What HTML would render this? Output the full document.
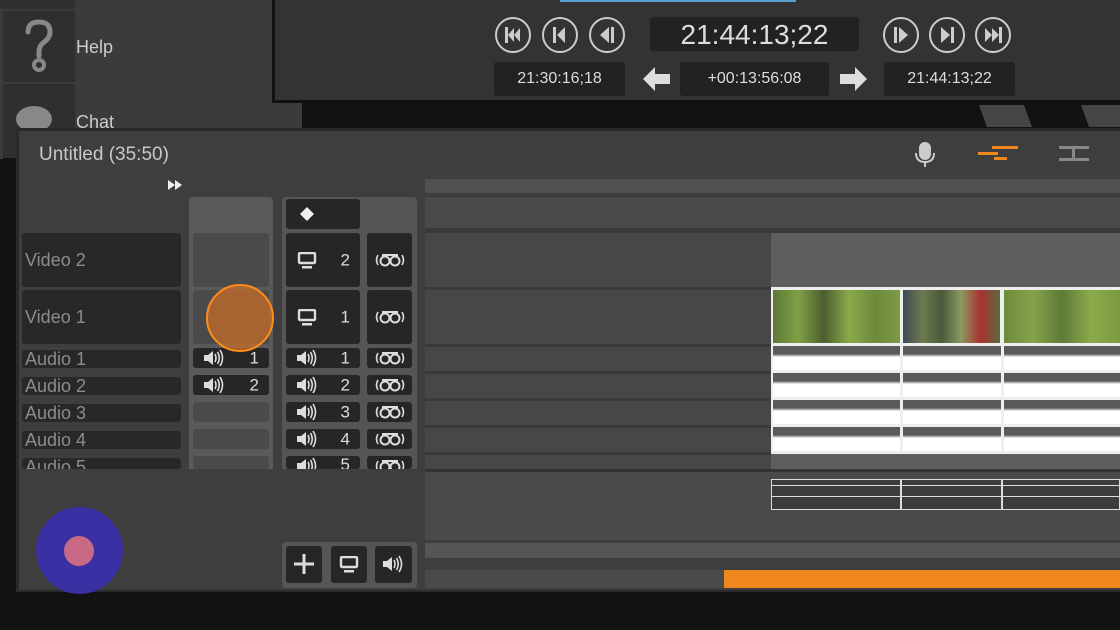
<!DOCTYPE html>
<html><head><meta charset="utf-8"><style>
*{margin:0;padding:0;box-sizing:border-box}
body{width:1120px;height:630px;background:#121212;position:relative;overflow:hidden;font-family:"Liberation Sans","DejaVu Sans",sans-serif;color:#ccc}
div,svg{position:absolute}
.lbl{background:#282828;border-radius:3px;color:#8c8c8c;font-size:18px;padding-left:3px;line-height:1}
.c{background:#262626;border-radius:3px;color:#ddd;font-size:17px}
.tc{background:#222;border-radius:3px;color:#ddd;text-align:center}
.btn{width:36px;height:36px;border:2px solid #ccc;border-radius:50%}
.row{left:425px;width:695px;background:#474747}
.n{position:absolute;right:10px;top:50%;transform:translateY(-50%);line-height:1}
</style></head><body>
<svg width="0" height="0" style="position:absolute">
<defs>
<g id="spk"><path d="M1 6H5L10 2V16L5 12H1Z" fill="#ddd"/><path d="M12 5Q14 9 12 13M14.5 3Q18 9 14.5 15M17 1Q22 9 17 17" stroke="#ddd" stroke-width="1.6" fill="none"/></g>
<g id="mon"><rect x="2" y="1" width="16" height="10" rx="1" fill="none" stroke="#ddd" stroke-width="2.4"/><rect x="5" y="14" width="10" height="2.5" fill="#ddd"/></g>
<g id="bin"><path d="M3 3Q0 8 3 13" stroke="#ddd" stroke-width="1.6" fill="none"/><path d="M27 3Q30 8 27 13" stroke="#ddd" stroke-width="1.6" fill="none"/><circle cx="10" cy="9" r="4.5" fill="none" stroke="#ddd" stroke-width="2"/><circle cx="20" cy="9" r="4.5" fill="none" stroke="#ddd" stroke-width="2"/><rect x="7" y="2" width="16" height="2" fill="#ddd"/></g>
</defs></svg>
<!-- sidebar -->
<div style="left:0;top:0;width:302px;height:128px;background:#3b3b3b"></div>
<div style="left:0;top:0;width:75px;height:158px;background:#2f2f2f"></div>
<div style="left:0;top:9px;width:75px;height:2px;background:#3b3b3b"></div>
<div style="left:0;top:82px;width:75px;height:2px;background:#3b3b3b"></div>
<div style="left:0;top:9px;width:3px;height:150px;background:#3b3b3b"></div>
<svg style="left:22px;top:18px" width="34" height="56" viewBox="0 0 34 56"><path d="M6 14Q6 4 17 4Q28 4 28 14Q28 20 21 25Q17 28 17 34V38" stroke="#888" stroke-width="5" fill="none" stroke-linecap="round"/><circle cx="17" cy="47" r="5" fill="none" stroke="#888" stroke-width="4"/></svg>
<div style="left:76px;top:37px;font-size:18px;color:#ccc">Help</div>
<div style="left:16px;top:106px;width:36px;height:26px;border-radius:50%;background:#888"></div>
<div style="left:76px;top:112px;font-size:18px;color:#ccc">Chat</div>
<!-- transport -->
<div style="left:272px;top:0;width:848px;height:103px;background:#111"></div>
<div style="left:275px;top:0;width:845px;height:100px;background:#333"></div>
<div style="left:560px;top:0;width:236px;height:2px;background:#5a9ed0"></div>
<div class="btn" style="left:495px;top:17px"><svg width="32" height="32" viewBox="0 0 32 32"><rect x="8" y="8" width="3" height="16" fill="#ccc"/><path d="M11 16L17 9V23ZM17 16L23 9V23Z" fill="#ccc"/></svg></div>
<div class="btn" style="left:542px;top:17px"><svg width="32" height="32" viewBox="0 0 32 32"><rect x="9" y="8" width="3" height="16" fill="#ccc"/><path d="M13 16L21 8V24Z" fill="#ccc"/></svg></div>
<div class="btn" style="left:589px;top:17px"><svg width="32" height="32" viewBox="0 0 32 32"><path d="M9 16L18 8V24Z" fill="#ccc"/><rect x="20" y="8" width="3" height="16" fill="#ccc"/></svg></div>
<div class="tc" style="left:650px;top:17px;width:209px;height:34px;font-size:28px;line-height:36px">21:44:13;22</div>
<div class="btn" style="left:883px;top:17px"><svg width="32" height="32" viewBox="0 0 32 32"><rect x="9" y="8" width="3" height="16" fill="#ccc"/><path d="M14 8L23 16L14 24Z" fill="#ccc"/></svg></div>
<div class="btn" style="left:929px;top:17px"><svg width="32" height="32" viewBox="0 0 32 32"><path d="M10 8L19 16L10 24Z" fill="#ccc"/><rect x="20" y="8" width="3" height="16" fill="#ccc"/></svg></div>
<div class="btn" style="left:975px;top:17px"><svg width="32" height="32" viewBox="0 0 32 32"><path d="M8 9L15 16L8 23ZM15 9L22 16L15 23Z" fill="#ccc"/><rect x="22" y="8" width="3" height="16" fill="#ccc"/></svg></div>
<div class="tc" style="left:494px;top:62px;width:131px;height:34px;font-size:16px;line-height:34px">21:30:16;18</div>
<svg style="left:642px;top:65px" width="30" height="28" viewBox="0 0 30 28"><path d="M1 14L13 2V9H28V19H13V26Z" fill="#ddd"/></svg>
<div class="tc" style="left:680px;top:62px;width:149px;height:34px;font-size:16px;line-height:34px">+00:13:56:08</div>
<svg style="left:838px;top:65px" width="30" height="28" viewBox="0 0 30 28"><path d="M29 14L17 2V9H2V19H17V26Z" fill="#ddd"/></svg>
<div class="tc" style="left:884px;top:62px;width:131px;height:34px;font-size:16px;line-height:34px">21:44:13;22</div>
<div style="left:983px;top:105px;width:45px;height:22px;background:#454545;transform:skewX(20deg)"></div>
<div style="left:1085px;top:105px;width:45px;height:22px;background:#454545;transform:skewX(20deg)"></div>
<!-- main panel -->
<div style="left:16px;top:128px;width:1104px;height:464px;background:#2a2a2a"></div>
<div style="left:19px;top:131px;width:1101px;height:459px;background:#3e3e3e"></div>
<div style="left:39px;top:144px;font-size:19px;color:#c8c8c8">Untitled (35:50)</div>
<svg style="left:167px;top:180px" width="16" height="10" viewBox="0 0 16 10"><path d="M1 0L8 5L1 10ZM8 0L15 5L8 10Z" fill="#eee"/></svg>
<svg style="left:912px;top:140px" width="26" height="28" viewBox="0 0 26 28"><rect x="7" y="2" width="12" height="18" rx="6" fill="#ccc"/><path d="M4 13Q4 22 13 22Q22 22 22 13" stroke="#ccc" stroke-width="2" fill="none"/><rect x="12" y="22" width="2" height="5" fill="#ccc"/></svg>
<div style="left:978px;top:152px;width:20px;height:3px;background:#f0861e"></div>
<div style="left:992px;top:146px;width:26px;height:3px;background:#f0861e"></div>
<div style="left:994px;top:157px;width:13px;height:3px;background:#f0861e"></div>
<div style="left:1059px;top:146px;width:30px;height:3px;background:#888"></div>
<div style="left:1059px;top:158px;width:30px;height:3px;background:#888"></div>
<div style="left:1072px;top:146px;width:3px;height:14px;background:#888"></div>
<!-- timeline -->
<div style="left:425px;top:179px;width:695px;height:14px;background:#505050"></div>
<div style="left:425px;top:196px;width:695px;height:273px;background:#3a3a3a"></div>
<div class="row" style="top:197px;height:31px;background:#4a4a4a"></div>
<div class="row" style="top:233px;height:54px"></div>
<div class="row" style="top:290px;height:54px"></div>
<div class="row" style="top:347px;height:24px"></div>
<div class="row" style="top:374px;height:24px"></div>
<div class="row" style="top:401px;height:24px"></div>
<div class="row" style="top:428px;height:24px"></div>
<div class="row" style="top:455px;height:14px"></div>
<div style="left:771px;top:233px;width:349px;height:236px;background:#5e5e5e"></div>
<div style="left:771px;top:287px;width:349px;height:167px;background:#eee"></div>
<div style="left:773px;top:290px;width:127px;height:53px;background:linear-gradient(90deg,#5c7a35,#7fa046,#4c5e30,#8aaa4a,#6d8a3c,#7b9a42)"></div>
<div style="left:903px;top:290px;width:97px;height:53px;background:linear-gradient(90deg,#3d4a55,#6d7a50,#4a5a3a,#8a9a60,#aa3030,#5a6a40)"></div>
<div style="left:1004px;top:290px;width:116px;height:53px;background:linear-gradient(90deg,#6d8a3c,#86a34a,#5e7a38,#8aaa4a,#7b9a42)"></div>
<div style="left:773px;top:346px;width:347px;height:106px;background:repeating-linear-gradient(180deg,#5a5a5a 0,#5a5a5a 8px,#fff 11px,#fff 24px,#eee 24px,#eee 27px)"></div>
<div style="left:900px;top:287px;width:3px;height:167px;background:#eee"></div>
<div style="left:1001px;top:287px;width:3px;height:167px;background:#eee"></div>
<div style="left:425px;top:469px;width:695px;height:3px;background:#333"></div>
<div style="left:425px;top:472px;width:695px;height:68px;background:#4a4a4a"></div>
<div style="left:771px;top:479px;width:349px;height:31px;border:1px solid #ddd;background:#3c3c3c"></div>
<div style="left:771px;top:485px;width:349px;height:1px;background:#ddd"></div>
<div style="left:771px;top:496px;width:349px;height:1px;background:#ddd"></div>
<div style="left:900px;top:479px;width:2px;height:31px;background:#ddd"></div>
<div style="left:1001px;top:479px;width:2px;height:31px;background:#ddd"></div>
<div style="left:425px;top:543px;width:695px;height:15px;background:#555"></div>
<div style="left:425px;top:570px;width:695px;height:18px;background:#4a4a4a"></div>
<div style="left:724px;top:570px;width:396px;height:18px;background:#f0861e"></div>
<!-- labels -->
<div class="lbl" style="left:22px;top:233px;width:159px;height:54px;line-height:54px">Video 2</div>
<div class="lbl" style="left:22px;top:290px;width:159px;height:54px;line-height:54px">Video 1</div>
<div class="lbl" style="left:22px;top:350px;width:159px;height:18px">Audio 1</div>
<div class="lbl" style="left:22px;top:377px;width:159px;height:18px">Audio 2</div>
<div class="lbl" style="left:22px;top:404px;width:159px;height:18px">Audio 3</div>
<div class="lbl" style="left:22px;top:431px;width:159px;height:18px">Audio 4</div>
<div class="lbl" style="left:22px;top:458px;width:159px;height:11px;overflow:hidden">Audio 5</div>
<!-- col1 -->
<div style="left:189px;top:197px;width:84px;height:272px;background:#5a5a5a;border-radius:4px 4px 0 0"></div>
<div style="left:193px;top:233px;width:76px;height:54px;background:#4a4a4a;border-radius:3px"></div>
<div style="left:193px;top:290px;width:76px;height:54px;background:#4a4a4a;border-radius:3px"></div>
<div class="c" style="left:193px;top:348px;width:76px;height:20px"><svg style="left:10px;top:1px" width="22" height="18"><use href="#spk"/></svg><span class="n">1</span></div>
<div class="c" style="left:193px;top:375px;width:76px;height:20px"><svg style="left:10px;top:1px" width="22" height="18"><use href="#spk"/></svg><span class="n">2</span></div>
<div style="left:193px;top:402px;width:76px;height:20px;background:#4a4a4a;border-radius:3px"></div>
<div style="left:193px;top:429px;width:76px;height:20px;background:#4a4a4a;border-radius:3px"></div>
<div style="left:193px;top:456px;width:76px;height:13px;background:#4a4a4a;border-radius:3px"></div>
<!-- col2 -->
<div style="left:282px;top:197px;width:135px;height:272px;background:#555;border-radius:4px 4px 0 0"></div>
<div class="c" style="left:286px;top:199px;width:74px;height:30px"><svg style="left:14px;top:8px" width="14" height="14"><path d="M7 0L14 7L7 14L0 7Z" fill="#eee"/></svg></div>
<div class="c" style="left:286px;top:233px;width:74px;height:54px"><svg style="left:11px;top:19px" width="20" height="17"><use href="#mon"/></svg><span class="n">2</span></div>
<div class="c" style="left:367px;top:233px;width:45px;height:54px"><svg style="left:8px;top:19px" width="30" height="16"><use href="#bin"/></svg></div>
<div class="c" style="left:286px;top:290px;width:74px;height:54px"><svg style="left:11px;top:19px" width="20" height="17"><use href="#mon"/></svg><span class="n">1</span></div>
<div class="c" style="left:367px;top:290px;width:45px;height:54px"><svg style="left:8px;top:19px" width="30" height="16"><use href="#bin"/></svg></div>
<div class="c" style="left:286px;top:348px;width:74px;height:20px"><svg style="left:10px;top:1px" width="22" height="18"><use href="#spk"/></svg><span class="n">1</span></div>
<div class="c" style="left:367px;top:348px;width:45px;height:20px"><svg style="left:8px;top:2px" width="30" height="16"><use href="#bin"/></svg></div>
<div class="c" style="left:286px;top:375px;width:74px;height:20px"><svg style="left:10px;top:1px" width="22" height="18"><use href="#spk"/></svg><span class="n">2</span></div>
<div class="c" style="left:367px;top:375px;width:45px;height:20px"><svg style="left:8px;top:2px" width="30" height="16"><use href="#bin"/></svg></div>
<div class="c" style="left:286px;top:402px;width:74px;height:20px"><svg style="left:10px;top:1px" width="22" height="18"><use href="#spk"/></svg><span class="n">3</span></div>
<div class="c" style="left:367px;top:402px;width:45px;height:20px"><svg style="left:8px;top:2px" width="30" height="16"><use href="#bin"/></svg></div>
<div class="c" style="left:286px;top:429px;width:74px;height:20px"><svg style="left:10px;top:1px" width="22" height="18"><use href="#spk"/></svg><span class="n">4</span></div>
<div class="c" style="left:367px;top:429px;width:45px;height:20px"><svg style="left:8px;top:2px" width="30" height="16"><use href="#bin"/></svg></div>
<div class="c" style="left:286px;top:456px;width:74px;height:13px;overflow:hidden"><svg style="left:10px;top:1px" width="22" height="18"><use href="#spk"/></svg><span style="position:absolute;right:10px;top:0;line-height:1">5</span></div>
<div class="c" style="left:367px;top:456px;width:45px;height:13px;overflow:hidden"><svg style="left:8px;top:2px" width="30" height="16"><use href="#bin"/></svg></div>
<!-- bottom buttons -->
<div style="left:282px;top:542px;width:135px;height:46px;background:#555;border-radius:4px"></div>
<div class="c" style="left:286px;top:546px;width:36px;height:37px"><svg style="left:8px;top:8px" width="20" height="20"><rect x="8.5" y="0" width="3" height="20" fill="#ddd"/><rect x="0" y="8.5" width="20" height="3" fill="#ddd"/></svg></div>
<div class="c" style="left:331px;top:546px;width:36px;height:37px"><svg style="left:8px;top:10px" width="20" height="17"><use href="#mon"/></svg></div>
<div class="c" style="left:375px;top:546px;width:37px;height:37px"><svg style="left:7px;top:9px" width="22" height="18"><use href="#spk"/></svg></div>
<!-- overlays -->
<div style="left:206px;top:284px;width:68px;height:68px;border-radius:50%;background:rgba(200,110,40,.75);border:2px solid #ff8c1a"></div>
<div style="left:36px;top:507px;width:87px;height:87px;border-radius:50%;background:#3a2fa3"></div>
<div style="left:64px;top:536px;width:30px;height:30px;border-radius:50%;background:#c86a86"></div>
</body></html>
